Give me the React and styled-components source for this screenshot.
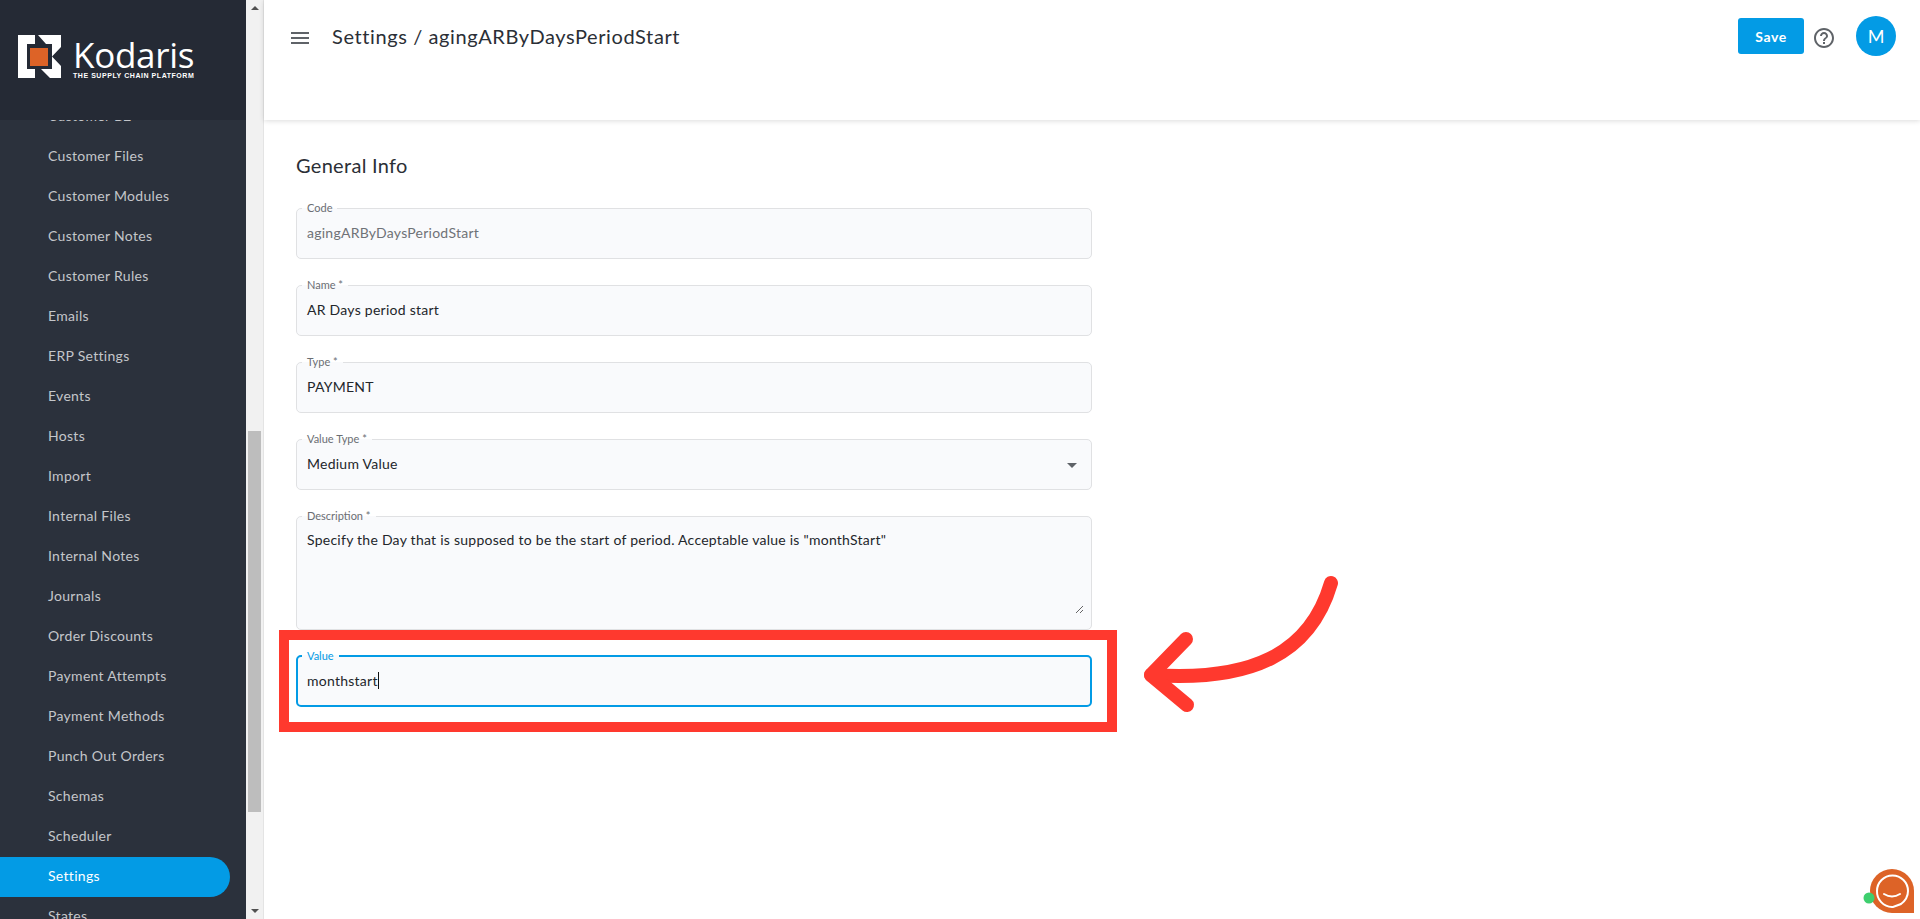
import React from "react";
import styled, { createGlobalStyle } from "styled-components";

const FONT = `"Lato", "Open Sans", "Liberation Sans", sans-serif`;

const GlobalStyle = createGlobalStyle`
  html, body {
    margin: 0;
    padding: 0;
    height: 100%;
    overflow: hidden;
    background: #fff;
    font-family: ${FONT};
  }
  * { box-sizing: border-box; }
`;

const Page = styled.div`
  position: relative;
  display: flex;
  width: 1920px;
  height: 919px;
  overflow: hidden;
  background: #fff;
`;

const Sidebar = styled.aside`
  display: flex;
  flex-direction: column;
  width: 246px;
  height: 100%;
  flex-shrink: 0;
  background: #2b313c;
`;

const LogoBar = styled.div`
  position: relative;
  z-index: 1;
  display: flex;
  align-items: flex-start;
  height: 120px;
  flex-shrink: 0;
  padding: 35px 0 0 18px;
  background: #252a35;
`;

const LogoIcon = styled.svg`
  flex-shrink: 0;
  width: 43px;
  height: 43px;
  margin-right: 12px;
`;

const LogoWords = styled.div`
  display: flex;
  flex-direction: column;
`;

const LogoName = styled.span`
  margin-top: 3px;
  color: #fff;
  font-family: "Open Sans", sans-serif;
  font-size: 35px;
  line-height: 34px;
  letter-spacing: -0.3px;
`;

const LogoTag = styled.span`
  color: #fff;
  font-family: "Liberation Sans", sans-serif;
  font-size: 7px;
  font-weight: 700;
  line-height: 8px;
  letter-spacing: 0.55px;
  white-space: nowrap;
`;

const Menu = styled.nav`
  flex: 1;
  min-height: 0;
  overflow: hidden;
`;

const MenuList = styled.div`
  margin-top: -23px;
`;

const MenuItem = styled.div`
  display: flex;
  align-items: center;
  height: 40px;
  width: 230px;
  padding: 0 0 4px 48px;
  border-radius: 0 20px 20px 0;
  font-size: 14px;
  letter-spacing: 0.3px;
  color: ${({ $active }) => ($active ? "#fff" : "#c4c6ca")};
  background: ${({ $active }) => ($active ? "#039be5" : "transparent")};
`;

const ScrollTrack = styled.div`
  display: flex;
  flex-direction: column;
  align-items: center;
  width: 18px;
  height: 100%;
  flex-shrink: 0;
  background: #f1f1f1;
  border-right: 1px solid #e4e4e4;
`;

const ScrollArrow = styled.div`
  width: 0;
  height: 0;
  margin: 6px 0;
  border-left: 4px solid transparent;
  border-right: 4px solid transparent;
  ${({ $down }) =>
    $down
      ? "border-top: 4px solid #505050;"
      : "border-bottom: 4px solid #505050;"}
`;

const ScrollThumb = styled.div`
  width: 13px;
  height: 381px;
  margin-top: 415px;
  margin-bottom: auto;
  background: #bdbdbd;
`;

const Main = styled.main`
  flex: 1;
  display: flex;
  flex-direction: column;
  min-width: 0;
  background: #fff;
`;

const TopBar = styled.header`
  display: flex;
  align-items: flex-start;
  height: 120px;
  flex-shrink: 0;
  padding: 18px 24px 0 24px;
  background: #fff;
  box-shadow: 0 1px 5px rgba(0, 0, 0, 0.14);
`;

const MenuButton = styled.svg`
  width: 24px;
  height: 24px;
  margin-top: 8px;
  fill: #5f6368;
`;

const Title = styled.h1`
  flex: 1;
  margin: 0 0 0 20px;
  color: #2b2f36;
  font-size: 20px;
  font-weight: 400;
  line-height: 36px;
  letter-spacing: 0.6px;
`;

const SaveButton = styled.button`
  width: 66px;
  height: 36px;
  border: 0;
  border-radius: 3px;
  background: #039be5;
  color: #fff;
  font-family: ${FONT};
  font-size: 14px;
  font-weight: 700;
  letter-spacing: 0.6px;
`;

const HelpIcon = styled.svg`
  width: 24px;
  height: 24px;
  margin: 8px 0 0 8px;
  fill: #5f6368;
`;

const Avatar = styled.div`
  display: flex;
  align-items: center;
  justify-content: center;
  width: 40px;
  height: 40px;
  margin: -2px 0 0 20px;
  border-radius: 50%;
  background: #039be5;
  color: #fff;
  font-size: 18px;
`;

const Content = styled.section`
  width: 796px;
  margin-left: 32px;
`;

const SectionTitle = styled.h2`
  margin: 33px 0 25px;
  color: #2b2f36;
  font-size: 20px;
  font-weight: 400;
  line-height: 24px;
  letter-spacing: 0.3px;
`;

const Form = styled.div`
  display: flex;
  flex-direction: column;
  gap: 20px;
`;

const Field = styled.fieldset`
  position: relative;
  min-width: 0;
  height: ${({ $height }) => $height || 57}px;
  margin: 0;
  padding: 0 ${({ $focused }) => ($focused ? 9 : 10)}px;
  border: ${({ $focused }) =>
    $focused ? "2px solid #039be5" : "1px solid #e0e1e3"};
  border-radius: 5px;
  background: #f9fafc;
`;

const Legend = styled.legend`
  margin-left: -5px;
  padding: 0 5px;
  color: ${({ $focused }) => ($focused ? "#039be5" : "#6b6e73")};
  font-size: 11px;
  line-height: 12px;
`;

const FieldValue = styled.div`
  display: flex;
  align-items: center;
  height: 36px;
  font-size: 14px;
  letter-spacing: 0.25px;
  color: ${({ $muted }) => ($muted ? "#6f7277" : "#23262b")};
`;

const Caret = styled.span`
  width: 1px;
  height: 17px;
  background: #111;
`;

const SelectArrow = styled.span`
  position: absolute;
  right: 14px;
  top: 18px;
  width: 0;
  height: 0;
  border-left: 5px solid transparent;
  border-right: 5px solid transparent;
  border-top: 5px solid #5f6368;
`;

const TextArea = styled.textarea`
  display: block;
  width: calc(100% + 3px);
  height: 90px;
  margin-top: 2px;
  padding: 7px 0 0;
  border: 0;
  outline: 0;
  resize: vertical;
  background: transparent;
  color: #23262b;
  font-family: ${FONT};
  font-size: 14px;
  line-height: 18px;
  letter-spacing: 0.25px;
`;

const RedBox = styled.div`
  position: absolute;
  left: 279px;
  top: 630px;
  width: 838px;
  height: 102px;
  border: 10px solid #ff392e;
  pointer-events: none;
`;

const Arrow = styled.svg`
  position: absolute;
  left: 1130px;
  top: 570px;
  width: 220px;
  height: 160px;
  fill: none;
  stroke: #ff392e;
  stroke-width: 14;
  stroke-linecap: round;
  stroke-linejoin: round;
`;

const ChatBadge = styled.svg`
  position: absolute;
  left: 1860px;
  top: 865px;
  width: 60px;
  height: 54px;
`;

const menuItems = [
  "Customer B2",
  "Customer Files",
  "Customer Modules",
  "Customer Notes",
  "Customer Rules",
  "Emails",
  "ERP Settings",
  "Events",
  "Hosts",
  "Import",
  "Internal Files",
  "Internal Notes",
  "Journals",
  "Order Discounts",
  "Payment Attempts",
  "Payment Methods",
  "Punch Out Orders",
  "Schemas",
  "Scheduler",
  "Settings",
  "States",
];

const LogoMark = () => (
  <LogoIcon viewBox="0 0 43 43">
    <path fill="#fff" d="M0 0h17v9H9v25h8v9H0z" />
    <path fill="#fff" d="M20 0H43V12L34 21.5L43 31V43H32L23 34H34V9H28z" />
    <path fill="#dd6327" d="M12 13h18v18H12z" />
  </LogoIcon>
);

const App = () => {
  return (
    <Page>
      <GlobalStyle />
      <Sidebar>
        <LogoBar>
          <LogoMark />
          <LogoWords>
            <LogoName>Kodaris</LogoName>
            <LogoTag>THE SUPPLY CHAIN PLATFORM</LogoTag>
          </LogoWords>
        </LogoBar>
        <Menu>
          <MenuList>
            {menuItems.map((item) => (
              <MenuItem key={item} $active={item === "Settings"}>
                {item}
              </MenuItem>
            ))}
          </MenuList>
        </Menu>
      </Sidebar>
      <ScrollTrack>
        <ScrollArrow />
        <ScrollThumb />
        <ScrollArrow $down />
      </ScrollTrack>
      <Main>
        <TopBar>
          <MenuButton viewBox="0 0 24 24">
            <path d="M3 18h18v-2H3v2zm0-5h18v-2H3v2zm0-7v2h18V6H3z" />
          </MenuButton>
          <Title>Settings / agingARByDaysPeriodStart</Title>
          <SaveButton>Save</SaveButton>
          <HelpIcon viewBox="0 0 24 24">
            <path d="M11 18h2v-2h-2v2zm1-16C6.48 2 2 6.48 2 12s4.48 10 10 10 10-4.48 10-10S17.52 2 12 2zm0 18c-4.41 0-8-3.59-8-8s3.59-8 8-8 8 3.59 8 8-3.59 8-8 8zm0-14c-2.21 0-4 1.79-4 4h2c0-1.1.9-2 2-2s2 .9 2 2c0 2-3 1.75-3 5h2c0-2.25 3-2.5 3-5 0-2.21-1.79-4-4-4z" />
          </HelpIcon>
          <Avatar>M</Avatar>
        </TopBar>
        <Content>
          <SectionTitle>General Info</SectionTitle>
          <Form>
            <Field>
              <Legend>Code</Legend>
              <FieldValue $muted>agingARByDaysPeriodStart</FieldValue>
            </Field>
            <Field>
              <Legend>Name *</Legend>
              <FieldValue>AR Days period start</FieldValue>
            </Field>
            <Field>
              <Legend>Type *</Legend>
              <FieldValue>PAYMENT</FieldValue>
            </Field>
            <Field>
              <Legend>Value Type *</Legend>
              <FieldValue>Medium Value</FieldValue>
              <SelectArrow />
            </Field>
            <Field $height={120}>
              <Legend>Description *</Legend>
              <TextArea
                readOnly
                defaultValue={'Specify the Day that is supposed to be the start of period. Acceptable value is "monthStart"'}
              />
            </Field>
            <Field $focused>
              <Legend $focused>Value</Legend>
              <FieldValue>
                monthstart
                <Caret />
              </FieldValue>
            </Field>
          </Form>
        </Content>
      </Main>
      <RedBox />
      <Arrow viewBox="0 0 220 160">
        <path d="M201 13C180 85 120 112 21 105" />
        <path d="M56 69L21 105L57 135" />
      </Arrow>
      <ChatBadge viewBox="0 0 60 54">
        <path fill="#dd6327" d="M10 26a22 22 0 1 1 44 0v22H32A22 22 0 0 1 10 26z" />
        <path fill="none" stroke="#fff" strokeWidth="2" d="M17 26a15.500 15.500 0 0 1 31 0c0 6-3 10-7 13l-8 3h-1a15.500 15.500 0 0 1-15-16z" />
        <path fill="none" stroke="#fff" strokeWidth="2" strokeLinecap="round" d="M24 29q8 5 16 0" />
        <circle cx="9" cy="33" r="5.5" fill="#3ecf6e" />
      </ChatBadge>
    </Page>
  );
};

export default App;
